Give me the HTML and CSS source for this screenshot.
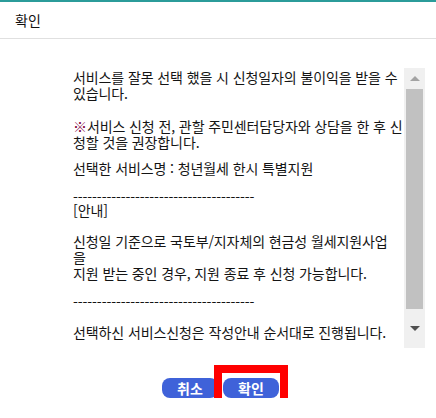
FILE: index.html
```html
<!DOCTYPE html>
<html lang="ko">
<head>
  <meta charset="UTF-8" />
  <meta name="viewport" content="width=device-width, initial-scale=1.0"/>
  <title>확인</title>
  <link rel="stylesheet" href="styles.css">
</head>
<body>
  <div class="dialog">
    <div class="dialog-head">확인</div>

    <div class="dialog-body">
      <div class="scroll-box">
        <div class="message">
          <p>서비스를 잘못 선택 했을 시 신청일자의 불이익을 받을 수<br>있습니다.</p>
          <p class="gap-lg"><span class="mark">※</span>서비스 신청 전, 관할 주민센터담당자와 상담을 한 후 신<br>청할 것을 권장합니다.</p>
          <p class="gap-sm">선택한 서비스명 : 청년월세 한시 특별지원</p>
          <p class="gap-sm"><span class="rule">--------------------------------------</span><br>[안내]</p>
          <p class="gap-md">신청일 기준으로 국토부/지자체의 현금성 월세지원사업<br>을<br>지원 받는 중인 경우, 지원 종료 후 신청 가능합니다.</p>
          <p class="gap-sm"><span class="rule">--------------------------------------</span></p>
          <p class="gap-lg">선택하신 서비스신청은 작성안내 순서대로 진행됩니다.</p>
        </div>

        <div class="scrollbar">
          <span class="arrow up"></span>
          <div class="thumb"></div>
          <span class="arrow down"></span>
        </div>
      </div>

      <div class="actions">
        <button type="button" class="btn">취소</button>
        <span class="highlight">
          <button type="button" class="btn">확인</button>
        </span>
      </div>
    </div>
  </div>
</body>
</html>
```

FILE: styles.css
```css
html, body {
  margin: 0;
  padding: 0;
  background: #fff;
}

body {
  font-family: "Noto Sans CJK KR", "Noto Sans", sans-serif;
  color: #141414;
}

.dialog {
  border-top: 2px solid #2b9c9a;
}

.dialog-head {
  height: 36px;
  line-height: 36px;
  padding-left: 15px;
  font-size: 14px;
  color: #111;
  border-bottom: 1px solid #e0e0e0;
}

.dialog-body {
  padding-top: 29px;
}

.scroll-box {
  display: flex;
  height: 280px;
  margin-right: 11px;
}

.message {
  flex: 1;
  padding: 1px 0 0 73px;
  font-size: 14px;
  line-height: 16px;
  letter-spacing: -0.1px;
  white-space: nowrap;
  overflow: hidden;
}

.message p {
  margin: 0;
}

.gap-lg {
  margin-top: 17px !important;
}

.gap-md {
  margin-top: 15px !important;
}

.gap-sm {
  margin-top: 10px !important;
}

.mark {
  color: #800040;
}

.rule {
  position: relative;
  top: 3px;
}

.scrollbar {
  width: 21px;
  background: #f0f0f0;
  display: flex;
  flex-direction: column;
  align-items: center;
}

.thumb {
  width: 17px;
  height: 220px;
  background: #c1c1c1;
}

.arrow {
  width: 0;
  height: 0;
  border-left: 5px solid transparent;
  border-right: 5px solid transparent;
}

.arrow.up {
  border-bottom: 5px solid #a3a3a3;
  margin: 8px 0 8px;
}

.arrow.down {
  border-top: 5px solid #505050;
  margin-top: 17px;
}

.actions {
  display: flex;
  justify-content: center;
  gap: 5px;
  margin-top: 30px;
  padding-left: 5px;
}

.btn {
  width: 56px;
  height: 20px;
  padding: 0;
  border: none;
  border-radius: 8px;
  background: #3f62d9;
  color: #fff;
  font-family: inherit;
  font-size: 14px;
  font-weight: bold;
  line-height: 20px;
}

.highlight {
  position: relative;
  display: flex;
}

.highlight::after {
  content: "";
  position: absolute;
  top: -13px;
  bottom: -14px;
  left: -9px;
  right: -9px;
  border: 8px solid #ff0000;
}
```
